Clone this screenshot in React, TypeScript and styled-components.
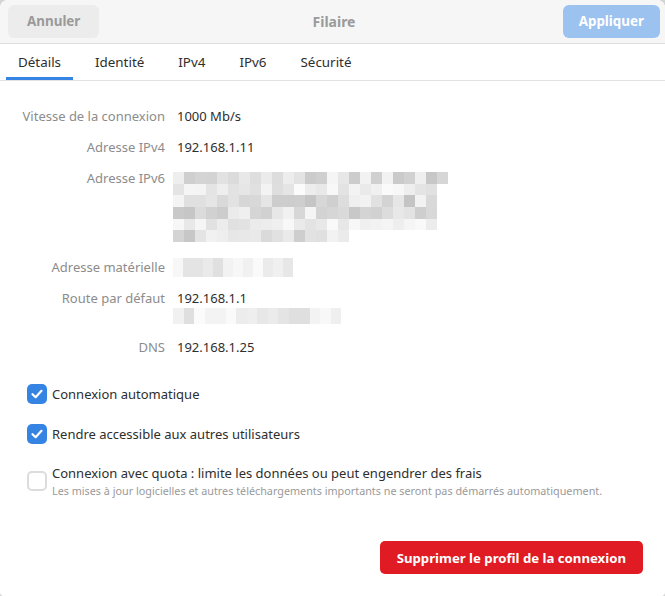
import styled, { createGlobalStyle } from "styled-components";

const GlobalStyle = createGlobalStyle`
    html, body {
        margin: 0;
        padding: 0;
        background: #d4d4d4;
    }
    body {
        font-family: "Noto Sans", "Open Sans", sans-serif;
        -webkit-font-smoothing: antialiased;
    }
`

const Window = styled.div`
    width: 665px;
    height: 596px;
    background: #fff;
    border-radius: 8px 8px 4px 4px;
    overflow: hidden;
    display: flex;
    flex-direction: column;
    color: #2e2e2e;
`
const HeaderBar = styled.header`
    height: 44px;
    flex-shrink: 0;
    background: #f6f6f6;
    border-bottom: 1px solid #dedede;
    display: grid;
    grid-template-columns: 1fr auto 1fr;
    align-items: center;
    padding: 0 5px 0 8px;
    box-sizing: border-box;
`
const HeaderButton = styled.button<{ $suggested?: boolean }>`
    justify-self: ${({ $suggested }) => ($suggested ? "end" : "start")};
    height: 33px;
    padding: 0 ${({ $suggested }) => ($suggested ? "16px" : "19px")};
    border: none;
    border-radius: 6px;
    background: ${({ $suggested }) => ($suggested ? "#9cc2f0" : "#ececec")};
    color: ${({ $suggested }) => ($suggested ? "#fff" : "#9a9a9a")};
    font-family: inherit;
    font-size: 13.4px;
    font-weight: 700;
    margin-top: -1px;
`
const Title = styled.div`
    font-size: 14px;
    font-weight: 700;
    color: #9a9a9a;
`
const TabBar = styled.nav`
    height: 37px;
    flex-shrink: 0;
    display: flex;
    gap: 10px;
    padding: 0 6px;
    border-bottom: 1px solid #e2e2e2;
    box-sizing: border-box;
`
const Tab = styled.div<{ $active?: boolean }>`
    display: flex;
    align-items: center;
    padding: 0 12px;
    font-size: 13.4px;
    color: #2e2e2e;
    box-shadow: ${({ $active }) => ($active ? "inset 0 -3px 0 #3584e4" : "none")};
`
const Body = styled.div`
    flex: 1;
    display: flex;
    flex-direction: column;
    padding: 26px 22px 22px 0;
`
const DetailGrid = styled.dl`
    margin: 0;
    display: grid;
    grid-template-columns: 165px 1fr;
    column-gap: 12px;
    row-gap: 12px;
    font-size: 13px;
    line-height: 19px;
`
const Label = styled.dt`
    text-align: right;
    color: #8c8c8c;
`
const Value = styled.dd<{ $padTop?: number; $padBottom?: number }>`
    margin: 0;
    padding: ${({ $padTop }) => $padTop ?? 0}px 0 ${({ $padBottom }) => $padBottom ?? 0}px;
    color: #2e2e2e;
    display: flex;
    flex-direction: column;
    align-items: flex-start;
`
const MosaicBox = styled.div`
    display: flex;
    flex-direction: column;
    margin-left: -4px;
`
const MosaicLine = styled.div`
    display: flex;
`
const Cell = styled.span<{ $w: number; $h: number }>`
    display: block;
    width: ${({ $w }) => $w}px;
    height: ${({ $h }) => $h}px;
`
const Checks = styled.div`
    display: flex;
    flex-direction: column;
    gap: 20px;
    margin-top: 27px;
    padding-left: 27px;
`
const CheckRow = styled.label`
    display: flex;
    align-items: center;
    gap: 5px;
`
const Box = styled.span<{ $checked?: boolean }>`
    width: 20px;
    height: 20px;
    flex-shrink: 0;
    border-radius: 5px;
    box-sizing: border-box;
    background: ${({ $checked }) => ($checked ? "#3584e4" : "#fff")};
    border: ${({ $checked }) => ($checked ? "none" : "2px solid #dcdcdc")};
    display: flex;
    align-items: center;
    justify-content: center;
`
const CheckText = styled.div`
    display: flex;
    flex-direction: column;
`
const CheckLabel = styled.span`
    font-size: 13px;
    line-height: 19px;
    color: #2e2e2e;
`
const CheckHint = styled.span`
    font-size: 10.8px;
    line-height: 15px;
    color: #9a9a9a;
`
const Footer = styled.div`
    margin-top: auto;
    display: flex;
    justify-content: flex-end;
`
const DangerButton = styled.button`
    height: 33px;
    padding: 0 17px;
    border: none;
    border-radius: 5px;
    background: #e01b24;
    color: #fff;
    font-family: inherit;
    font-size: 13.2px;
    font-weight: 700;
`

// redacted values are shown as a grey pixel mosaic
function shade(seed: number, i: number, light: boolean) {
    const x = Math.sin(seed * 97.13 + i * 12.9898) * 43758.5453;
    const r = x - Math.floor(x);
    const base = light ? 222 : 196;
    const v = Math.round(base + r * (light ? 30 : 50));
    return `rgb(${v},${v},${v})`;
}

function Mosaic({ lines, cw, ch, seed, lightRows = [] }: {
    lines: number[]; cw: number; ch: number; seed: number; lightRows?: number[];
}) {
    return (
        <MosaicBox>
            {lines.map((count, row) => (
                <MosaicLine key={row}>
                    {Array.from({ length: count }).map((_, i) => (
                        <Cell key={i} $w={cw} $h={ch}
                            style={{ background: shade(seed + row, i, lightRows.includes(row)) }} />
                    ))}
                </MosaicLine>
            ))}
        </MosaicBox>
    );
}

function Check() {
    return (
        <svg width="14" height="14" viewBox="0 0 14 14">
            <path d="M2.5 7.2 L5.6 10.2 L11.5 3.8" fill="none" stroke="#fff" strokeWidth="2.2"
                strokeLinecap="round" strokeLinejoin="round" />
        </svg>
    );
}

export default function App() {
    return (
        <>
            <GlobalStyle />
            <Window>
                <HeaderBar>
                    <HeaderButton>Annuler</HeaderButton>
                    <Title>Filaire</Title>
                    <HeaderButton $suggested>Appliquer</HeaderButton>
                </HeaderBar>

                <TabBar>
                    <Tab $active>Détails</Tab>
                    <Tab>Identité</Tab>
                    <Tab>IPv4</Tab>
                    <Tab>IPv6</Tab>
                    <Tab>Sécurité</Tab>
                </TabBar>

                <Body>
                    <DetailGrid>
                        <Label>Vitesse de la connexion</Label>
                        <Value>1000 Mb/s</Value>

                        <Label>Adresse IPv4</Label>
                        <Value>192.168.1.11</Value>

                        <Label>Adresse IPv6</Label>
                        <Value $padTop={3} $padBottom={4}>
                            <Mosaic lines={[25, 24, 24, 24, 24, 16]} cw={11} ch={11.7} seed={3}
                                lightRows={[1, 4]} />
                        </Value>

                        <Label>Adresse matérielle</Label>
                        <Value>
                            <Mosaic lines={[12]} cw={10} ch={19} seed={11} lightRows={[0]} />
                        </Value>

                        <Label>Route par défaut</Label>
                        <Value $padBottom={2}>
                            192.168.1.1
                            <Mosaic lines={[16]} cw={10.5} ch={16} seed={17} lightRows={[0]} />
                        </Value>

                        <Label>DNS</Label>
                        <Value>192.168.1.25</Value>
                    </DetailGrid>

                    <Checks>
                        <CheckRow>
                            <Box $checked><Check /></Box>
                            <CheckLabel>Connexion automatique</CheckLabel>
                        </CheckRow>
                        <CheckRow>
                            <Box $checked><Check /></Box>
                            <CheckLabel>Rendre accessible aux autres utilisateurs</CheckLabel>
                        </CheckRow>
                        <CheckRow>
                            <Box />
                            <CheckText>
                                <CheckLabel>Connexion avec quota : limite les données ou peut engendrer des frais</CheckLabel>
                                <CheckHint>Les mises à jour logicielles et autres téléchargements importants ne seront pas démarrés automatiquement.</CheckHint>
                            </CheckText>
                        </CheckRow>
                    </Checks>

                    <Footer>
                        <DangerButton>Supprimer le profil de la connexion</DangerButton>
                    </Footer>
                </Body>
            </Window>
        </>
    );
}
